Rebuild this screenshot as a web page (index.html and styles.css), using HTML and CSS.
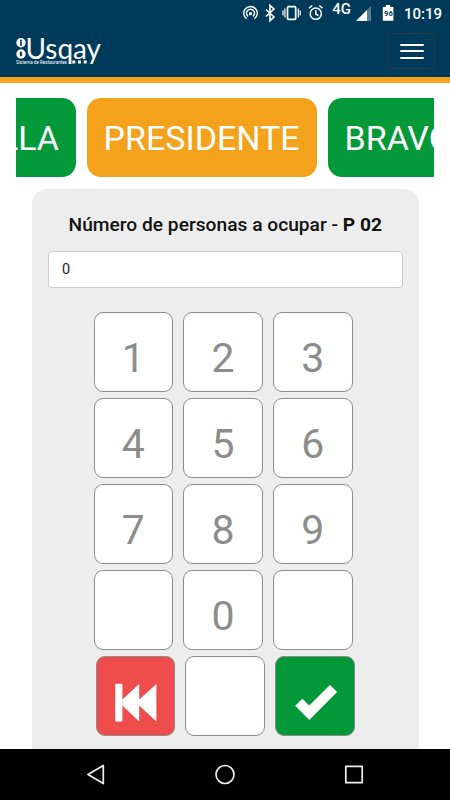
FILE: index.html
```html
<!DOCTYPE html>
<html lang="es">

<head>
  <meta charset="UTF-8" />
  <meta name="viewport" content="width=device-width, initial-scale=1.0" />
  <title>Usqay</title>
  <link rel="stylesheet" href="styles.css">
</head>

<body>
  <header class="header">
    <div class="status">
      <svg class="status-icons" width="162" height="26" viewBox="0 0 162 26">
        <!-- hotspot -->
        <g fill="none" stroke="#fff" stroke-width="1.4">
          <path d="M6.6 18.8a6.8 6.8 0 1 1 7.8 0" />
          <path d="M8.1 16.4a4 4 0 1 1 4.8 0" />
        </g>
        <circle cx="10.5" cy="13.7" r="1.6" fill="#fff" />
        <!-- bluetooth -->
        <path d="M26 9.5l8 7.5-4 3.6V5.4l4 3.6-8 7.5" fill="none" stroke="#fff" stroke-width="1.6" />
        <!-- vibrate -->
        <rect x="47.5" y="6.7" width="8.2" height="12.6" rx="1" fill="none" stroke="#fff" stroke-width="1.7" />
        <path d="M44.9 8.5v9M58.3 8.5v9M43 10.5v5M60.2 10.5v5" stroke="#fff" stroke-width="1.2" />
        <!-- alarm -->
        <g fill="none" stroke="#fff" stroke-width="1.5">
          <circle cx="75.8" cy="13.7" r="5.6" />
          <path d="M69 8.3l3.3-2.8M82.6 8.3l-3.3-2.8M75.8 10.2v3.8l2.6 1.6" />
        </g>
        <text x="92.3" y="13.8" class="network">4G</text>
        <!-- signal -->
        <path d="M116 21l15-15v15z" fill="#537b91" />
        <path d="M116 21l11-11v11z" fill="#fff" />
        <!-- battery -->
        <path d="M142.8 7h3V5h4.4v2h3.2v13.8h-10.6z" fill="#fff" />
        <text x="144.1" y="16" class="battery">96</text>
      </svg>
      <span class="clock">10:19</span>
    </div>
    <div class="navbar">
      <svg class="logo" width="90" height="36" viewBox="0 0 90 36">
        <circle cx="5" cy="6.8" r="4.7" fill="#fff" />
        <circle cx="5" cy="18" r="4.7" fill="#fff" />
        <path d="M5 4.2v5.2" stroke="#003a5b" stroke-width="1.6" stroke-linecap="round" />
        <ellipse cx="5" cy="18" rx="1.2" ry="2.4" fill="#003a5b" />
        <text x="9.5" y="22.8" textLength="75.5" lengthAdjust="spacingAndGlyphs" class="logo-name">Usqay</text>
        <text x="0" y="28" textLength="51" lengthAdjust="spacingAndGlyphs" class="logo-sub">Sistema de Restaurantes</text>
        <path d="M56.3 24.4h3v3h-3zM62 24.4h3v3h-3zM67.7 24.4h3v3h-3z" fill="#fff" />
      </svg>
      <button type="button" class="menu" aria-label="Menú">
        <span></span>
        <span></span>
        <span></span>
      </button>
    </div>
  </header>

  <main class="main">
    <div class="zones">
      <button type="button" class="zone">PARRILLA</button>
      <button type="button" class="zone active">PRESIDENTE</button>
      <button type="button" class="zone">BRAVO</button>
    </div>

    <div class="panel">
      <h2>Número de personas a ocupar - <b>P 02</b></h2>
      <input type="text" class="people" value="0" />
      <div class="keys">
        <button type="button">1</button>
        <button type="button">2</button>
        <button type="button">3</button>
        <button type="button">4</button>
        <button type="button">5</button>
        <button type="button">6</button>
        <button type="button">7</button>
        <button type="button">8</button>
        <button type="button">9</button>
        <button type="button"></button>
        <button type="button">0</button>
        <button type="button"></button>
      </div>
      <div class="keys actions">
        <button type="button" class="back" aria-label="Borrar">
          <svg width="78" height="78" viewBox="0 0 78 78">
            <rect x="18.2" y="26.8" width="7.2" height="37.7" rx="1.2" fill="#fff" />
            <path d="M25.3 42.5L42.2 27v15.5L59.4 27v37.4L42.2 48.5v15.9L25.3 48.5z" fill="#fff" />
          </svg>
        </button>
        <button type="button"></button>
        <button type="button" class="ok" aria-label="Aceptar">
          <svg width="78" height="78" viewBox="0 0 78 78">
            <path d="M19.2 48.7l7.2-7 6.8 6.8L54 27.9l7.1 7-27.8 28.2z" fill="#fff" />
          </svg>
        </button>
      </div>
    </div>
  </main>

  <footer class="android">
    <svg width="450" height="50" viewBox="0 0 450 50">
      <g fill="none" stroke="#eee" stroke-width="1.7" stroke-linejoin="round">
        <path d="M103.3 16.4v18.2l-15.3-9.1z" />
        <circle cx="225" cy="25.5" r="9" />
        <rect x="345.8" y="17.3" width="16.4" height="16.4" />
      </g>
    </svg>
  </footer>
</body>

</html>
```
FILE: styles.css
```css
* {
  margin: 0;
  padding: 0;
  box-sizing: border-box;
  font-family: Roboto, sans-serif;
}

body {
  height: 100vh;
  display: flex;
  flex-direction: column;
  background: #fff;
  overflow: hidden;
}

.header {
  height: 83px;
  flex-shrink: 0;
  background: #003a5b;
  border-bottom: 6px solid #f4a11c;
}

.status {
  height: 26px;
  display: flex;
  justify-content: space-between;
  padding: 0 8px 0 240px;
  color: #fff;
}

.network {
  font-size: 15px;
  font-weight: 500;
  fill: #fff;
}

.battery {
  font-size: 7.5px;
  font-weight: bold;
  fill: #003a5b;
}

.clock {
  font-size: 15px;
  font-weight: 500;
  line-height: 28px;
}

.navbar {
  display: flex;
  justify-content: space-between;
  padding: 7px 15px 0 16px;
}

.logo {
  margin-top: 3px;
  overflow: visible;
}

.logo-name {
  font-family: Lato, sans-serif;
  font-size: 29px;
  fill: #fff;
}

.logo-sub {
  font-size: 5px;
  fill: #fff;
}

.menu {
  width: 47px;
  height: 36px;
  display: flex;
  flex-direction: column;
  align-items: center;
  justify-content: center;
  gap: 4.5px;
  background: transparent;
  border: 1px solid #30343f;
  border-radius: 4px;
}

.menu span {
  width: 24px;
  height: 2px;
  border-radius: 1px;
  background: #fff;
}

.main {
  flex: 1;
  min-height: 0;
  padding: 15px 16px 0;
}

.zones {
  display: flex;
  gap: 10.5px;
  margin-bottom: 12px;
  overflow: hidden;
}

.zone {
  width: 230.5px;
  height: 79px;
  flex-shrink: 0;
  padding: 0 17px;
  border: none;
  border-radius: 14px;
  background: #039939;
  color: #fff;
  font-size: 34px;
  text-align: left;
}

/* list is scrolled so the active zone sits in the middle */
.zone:first-child {
  margin-left: -170.5px;
  text-align: right;
}

.zone.active {
  background: #f4a11c;
}

.panel {
  height: 600px;
  margin: 0 15.5px 0 16px;
  padding: 24px 16px 0;
  border-radius: 15px;
  background: #ededed;
}

.panel h2 {
  font-size: 19.2px;
  font-weight: 500;
  line-height: 23px;
  text-align: center;
  color: #111;
  margin-bottom: 15px;
}

.people {
  display: block;
  width: 100%;
  height: 37px;
  padding: 0 13px 1px;
  border: 1px solid #ccc;
  border-radius: 4px;
  background: #fff;
  font-size: 14.5px;
  color: #222;
  outline: none;
}

.keys {
  display: grid;
  grid-template-columns: repeat(3, 79.5px);
  column-gap: 10.3px;
  row-gap: 6px;
  margin: 24px 0 0 45.5px;
}

.keys button {
  height: 80px;
  padding-top: 12px;
  border: 1px solid #8c8c8c;
  border-radius: 9px;
  background: #fff;
  color: #8c8c8c;
  font-size: 41px;
}

.actions {
  margin: 6px 0 0 47.7px;
}

.keys .back,
.keys .ok {
  padding: 0;
}

.keys svg {
  display: block;
}

.keys .back {
  background: #ef4c4c;
}

.keys .ok {
  background: #039939;
}

.android {
  height: 51px;
  flex-shrink: 0;
  background: #000;
}

.android svg {
  display: block;
}
```
